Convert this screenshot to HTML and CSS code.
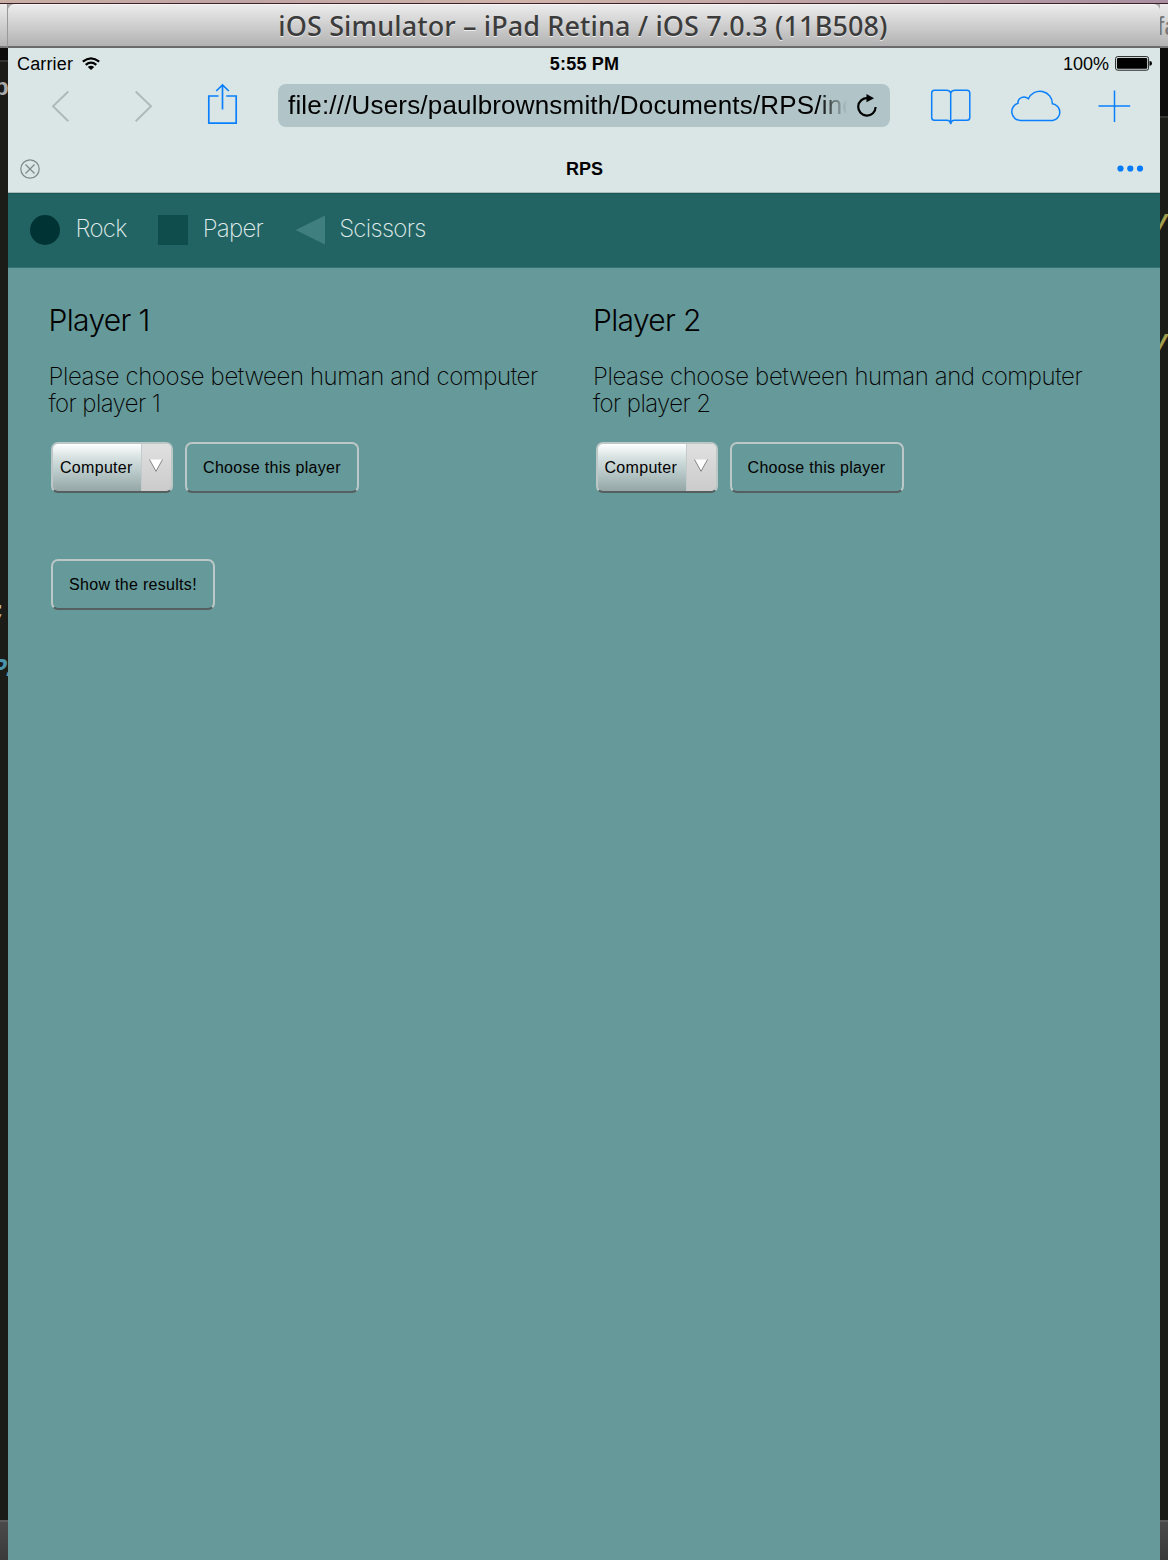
FILE: index.html
```html
<!DOCTYPE html>
<html lang="en">
<head>
<meta charset="utf-8">
<title>RPS</title>
<link rel="stylesheet" href="styles.css">
</head>
<body>
<div class="wallpaper"></div>
<div class="desktop">
  <aside class="edge edge-left">
    <div class="edge-title"></div>
    <div class="edge-tabs"></div>
    <div class="edge-code"></div>
    <div class="edge-foot"></div>
    <span class="frag frag-tab">p</span>
    <span class="frag frag-semi">;</span>
    <span class="frag frag-p">P.</span>
  </aside>
  <main class="window">
    <header class="titlebar"><span class="title-text">iOS Simulator – iPad Retina / iOS 7.0.3 (11B508)</span></header>
    <section class="browser">
      <div class="status">
        <div class="carrier"><span class="carrier-text">Carrier</span>
          <svg width="18" height="13" viewBox="0 0 18 13"><g fill="none" stroke="#000" stroke-width="2.2"><path d="M.8 4.7Q9-2 17.200 4.700"/><path d="M3.700 7.900Q9 3.500 14.300 7.900"/></g><path d="M5.800 10Q9 7.300 12.200 10L9 13Z"/></svg>
        </div>
        <span class="clock">5:55 PM</span>
        <div class="battery"><span class="percent">100%</span>
          <svg width="37" height="15" viewBox="0 0 37 15"><rect x=".6" y=".6" width="33" height="13.600" rx="2" fill="none" stroke="#222" stroke-width="1"/><rect x="2" y="2" width="30.200" height="10.800" rx="1"/><path d="M34.500 5Q37 5 37 7.400Q37 9.800 34.500 9.800Z"/></svg>
        </div>
      </div>
      <div class="toolbar">
        <svg class="ico" width="270" height="52" viewBox="0 0 270 52" fill="none">
          <g stroke="#b0b9b9" stroke-width="2"><path d="M60.300 13.500L45 28.300L60.300 43.200"/><path d="M127.700 13.500L143 28.300L127.700 43.200"/></g>
          <g stroke="#0a80ff" stroke-width="1.700"><path d="M210.500 18H200.800V45.200H228.200V18H218.200M214.500 31.500V7.200M208.200 13L214.500 7L220.800 13"/></g>
        </svg>
        <div class="address">
          <span class="url">file:///Users/paulbrownsmith/Documents/RPS/index.html</span>
          <svg width="22" height="24" viewBox="0 0 22 24"><path d="M11.500 4.200A8.700 8.700 0 1 0 19.600 13" fill="none" stroke="#000" stroke-width="2.200"/><path d="M10.500 0L18 4.300L10.500 8.200Z"/></svg>
        </div>
        <svg class="ico" width="270" height="52" viewBox="0 -0.5 270 52" fill="none" stroke="#0a80ff" stroke-width="1.500">
          <path d="M60.700 14.500Q59.700 11.700 56.500 11.700H44.500Q41.700 11.700 41.700 14.500V39Q41.700 41.800 44.500 41.800H57Q60 41.800 60.700 45.500Q61.400 41.800 64.400 41.800H77Q79.800 41.800 79.800 39V14.500Q79.800 11.700 77 11.700H65Q61.700 11.700 60.700 14.500V45"/>
          <path d="M130.500 42A8.800 8.800 0 0 1 128 24.800C127.500 19.500 134 16.500 138.400 20.300A12.500 12.500 0 0 1 162.400 25.200A8.500 8.500 0 0 1 162.800 42Z"/>
          <path d="M208.500 27.500H240.200M224.500 12V43.500"/>
        </svg>
      </div>
      <div class="tabs">
        <svg width="20" height="20" viewBox="0 0 20 20" fill="none" stroke="#7c8787" stroke-width="1.200"><circle cx="10" cy="10" r="9.200"/><path d="M5.500 5.500L14.500 14.500M14.500 5.500L5.500 14.500"/></svg>
        <span class="tab-name">RPS</span>
        <svg width="27" height="7" viewBox="0 0 27 7" fill="#007aff"><circle cx="3.500" cy="3.500" r="3.100"/><circle cx="13.300" cy="3.500" r="3.100"/><circle cx="23" cy="3.500" r="3.100"/></svg>
      </div>
    </section>
    <nav class="legend">
      <svg width="30" height="30"><circle cx="15" cy="15" r="15" fill="#033"/></svg><span class="word rock">Rock</span>
      <svg width="30" height="30"><path fill="#0f4d4d" d="M0 0H30V30H0Z"/></svg><span class="word paper">Paper</span>
      <svg width="30" height="30"><path fill="#407f7f" d="M.5 15L30 .5V29.500Z"/></svg><span class="word scissors">Scissors</span>
    </nav>
    <section class="game">
      <div class="players">
        <article class="player">
          <h2>Player 1</h2>
          <p>Please choose between human and computer<br><span class="last">for player 1</span></p>
          <div class="controls">
            <div class="select"><span class="value">Computer</span><span class="arrow"><svg width="14" height="13" viewBox="0 0 14 13"><path d="M.5 .5H13.500L7 12.500Z" fill="#fff"/><path d="M.5 .5L7 12.300L13.500 .5" fill="none" stroke="#777" stroke-width=".9"/></svg></span></div>
            <button class="btn choose">Choose this player</button>
          </div>
        </article>
        <article class="player">
          <h2>Player 2</h2>
          <p>Please choose between human and computer<br><span class="last">for player 2</span></p>
          <div class="controls">
            <div class="select"><span class="value">Computer</span><span class="arrow"><svg width="14" height="13" viewBox="0 0 14 13"><path d="M.5 .5H13.500L7 12.500Z" fill="#fff"/><path d="M.5 .5L7 12.300L13.500 .5" fill="none" stroke="#777" stroke-width=".9"/></svg></span></div>
            <button class="btn choose">Choose this player</button>
          </div>
        </article>
      </div>
      <button class="btn results">Show the results!</button>
    </section>
  </main>
  <aside class="edge edge-right">
    <div class="edge-title"></div>
    <div class="edge-tabs"></div>
    <div class="edge-code"></div>
    <div class="edge-foot"></div>
    <span class="frag frag-title">fa</span>
    <span class="frag frag-y1">y</span>
    <span class="frag frag-y2">y</span>
  </aside>
</div>
</body>
</html>
```
FILE: styles.css
```css
* { box-sizing: border-box; }
body { margin: 0; width: 1168px; height: 1560px; overflow: hidden; display: flex; flex-direction: column; background: #1b1b17; font-family: "Liberation Sans", Arial, sans-serif; color: #000; }
svg { display: block; flex: none; }
span { white-space: nowrap; }
.wallpaper { height: 4px; flex: none; background: linear-gradient(90deg, #c9afa6, #bfa4a5 20%, #cfb3ab 45%, #bba0a5 75%, #a98fa0); border-bottom: 1px solid #3c2226; }
.desktop { flex: 1; display: flex; min-height: 0; background: linear-gradient(#aaa 44px, #1b1b17 44px); }

/* slivers of the editor window behind the simulator */
.edge { width: 8px; position: relative; overflow: hidden; display: flex; flex-direction: column; }
.edge-title { height: 44px; background: linear-gradient(#ececec, #b4b4b4); border-bottom: 2px solid #7a797a; }
.edge-left .edge-title { border-right: 1px solid #999; }
.edge-tabs { background: #0d0d0c; border-bottom: 2px solid #33332f; }
.edge-left .edge-tabs { height: 14px; }
.edge-right .edge-tabs { height: 70px; }
.edge-code { flex: 1; background: #1b1b17; }
.edge-foot { height: 40px; background: linear-gradient(#4a4a4a, #3a3a3a); border-top: 2px solid #5c5c5e; }
.frag { position: absolute; font-size: 24px; line-height: 28px; }
.frag-tab { left: -6px; top: 69px; font-weight: bold; color: #aaa; }
.frag-semi { left: -8px; top: 594px; font: bold 24px/28px "Liberation Mono", monospace; color: #c4b9a0; }
.frag-p { left: -8px; top: 652px; font: italic bold 25px/28px "Liberation Mono", monospace; letter-spacing: -5px; color: #4a95ab; }
.frag-title { left: -3px; top: 8px; font-size: 26px; color: #777; }
.frag-y1, .frag-y2 { right: 0; font: italic bold 27px/28px "Liberation Mono", monospace; color: #a19b4c; }
.frag-y1 { top: 204px; }
.frag-y2 { top: 324px; }

.window { width: 1152px; display: flex; flex-direction: column; }
.titlebar { height: 44px; flex: none; display: flex; justify-content: center; padding-right: 2px; background: linear-gradient(#ebebeb, #b2b2b2); border-top: 1px solid #f5f5f5; border-bottom: 2px solid #6b696b; border-radius: 7px 7px 0 0; font: 500 27px/41px "Noto Sans", "Open Sans", sans-serif; letter-spacing: .12px; color: #3c3c3c; text-shadow: 0 1px 0 #eee; }
.browser { height: 145px; flex: none; display: flex; flex-direction: column; background: #dae6e5; border-bottom: 1px solid #a9bcbb; }
.status { height: 32px; display: grid; grid-template-columns: 1fr auto 1fr; align-items: center; padding: 0 8px 0 9px; font-size: 18px; }
.carrier, .battery { display: flex; align-items: center; gap: 9px; }
.battery { justify-content: flex-end; gap: 6px; }
.battery svg { margin-top: -1px; }
.carrier svg { margin-top: -1px; }
.carrier-text { letter-spacing: .15px; }
.clock { font-weight: bold; letter-spacing: .2px; }
.toolbar { height: 52px; margin-top: -2px; display: flex; align-items: center; }
.address { width: 612px; height: 43px; margin-top: 3px; display: flex; align-items: center; justify-content: space-between; padding: 0 12px 0 10px; background: #b1c5c8; border-radius: 8px; }
.url { width: 559px; overflow: hidden; font-size: 26px; line-height: 40px; margin-top: -1px; letter-spacing: .18px; -webkit-mask-image: linear-gradient(90deg, #000 95%, transparent 100%); mask-image: linear-gradient(90deg, #000 95%, transparent 100%); }
.tabs { flex: 1; display: grid; grid-template-columns: 1fr auto 1fr; align-items: center; padding: 15px 16px 0 12px; }
.tabs svg:last-child { justify-self: end; margin-top: -1px; }
.tab-name { font-size: 18px; font-weight: bold; padding: 1px 0 0 5px; }

.legend { height: 75px; flex: none; display: flex; align-items: center; padding: 0 0 1px 22.400px; background: #226464; border-bottom: 1px solid #34736f; border-top: 1px solid #1d5858; color: #e0eceb; font: 200 24px/30px Inter, sans-serif; letter-spacing: -.7px; }
.word { margin: -2px 31px 0 15px; }
.paper { margin-right: 31.500px; }
.scissors { margin-left: 14.500px; }
.game { flex: 1; padding: 32px 0 0 40.500px; background: #669999; }
.players { display: grid; grid-template-columns: 544.500px 544.500px; }
h2 { margin: 0; font: 300 30px/40px Inter, sans-serif; letter-spacing: -.65px; }
p { margin: 23px 0 0; font: 200 24px/27px Inter, sans-serif; letter-spacing: -.41px; }
.last { letter-spacing: -.6px; }
.controls { display: flex; margin: 25px 0 0 2.500px; gap: 12px; }
.select, .btn { height: 51px; border: 2px solid #bcc7c7; border-bottom-color: #555f5f; border-radius: 7px; font: 16px "Liberation Sans", Arial, sans-serif; color: #000; }
.select { width: 122px; display: flex; overflow: hidden; background: linear-gradient(#fff, #d7e2e1 28%, #b9c9c9 60%, #94a6a5); }
.value { flex: 1; display: flex; align-items: center; padding-left: 7px; letter-spacing: .3px; }
.arrow { width: 30px; padding: 15px 0 0 7px; background: linear-gradient(#e0e0e0, #cbcbcb); border-left: 1px solid #c5caca; }
.btn { display: block; padding: 0; background: transparent; white-space: nowrap; }
.choose { width: 174px; letter-spacing: .3px; }
.results { width: 164px; margin: 66px 0 0 2.500px; letter-spacing: .3px; }
```
